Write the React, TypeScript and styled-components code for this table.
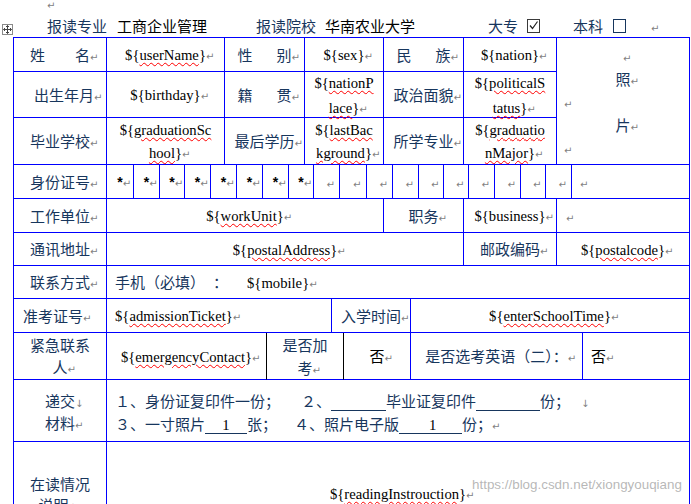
import React from "react";
import styled, { createGlobalStyle } from "styled-components";

const BLUE = "#0000ff";
const NAVY = "#17365d";
const CJK = `"Noto Sans CJK SC", "Noto Sans", sans-serif`;
const SERIF = `"Liberation Serif", "Noto Sans CJK SC", serif`;

const GlobalStyle = createGlobalStyle`
  html, body { margin: 0; padding: 0; background: #ffffff; overflow: hidden; }
  #root { width: 691px; height: 504px; overflow: hidden; }
`;

const Page = styled.div`
  position: relative;
  box-sizing: border-box;
  width: 691px;
  height: 504px;
  overflow: hidden;
  padding-left: 13px;
  font-family: ${CJK};
  font-size: 15px;
  color: ${NAVY};
  background: #fff;
`;

const TopMark = styled.div`
  height: 14px;
  padding-left: 34px;
  line-height: 6px;
`;

const Header = styled.div`
  height: 23px;
  display: flex;
  align-items: center;
  white-space: nowrap;
  line-height: 23px;
`;

const HText = styled.span<{ $ml: number; $black?: boolean }>`
  margin-left: ${(p) => p.$ml}px;
  color: ${(p) => (p.$black ? "#000" : NAVY)};
`;

const Tick = styled.span<{ $ml: number; $color: string }>`
  display: inline-flex;
  box-sizing: border-box;
  width: 13px;
  height: 14px;
  margin-left: ${(p) => p.$ml}px;
  border: 1px solid ${(p) => p.$color};
  align-items: center;
  justify-content: center;
`;

const Mark = styled.span<{ $ml?: number }>`
  display: inline-block;
  width: 0;
  margin-left: ${(p) => p.$ml ?? 0}px;
  font-family: "DejaVu Sans", sans-serif;
  font-size: 10px;
  line-height: 10px;
  font-weight: normal;
  color: #7f7f7f;
  white-space: nowrap;
`;

const TableWrap = styled.div`
  position: relative;
  width: 677px;
`;

const MoveHandle = styled.div`
  position: absolute;
  left: -11px;
  top: -13px;
  width: 11px;
  height: 11px;
  box-sizing: border-box;
  border: 1px solid #8a8a8a;
  background: #fff;
  display: flex;
  align-items: center;
  justify-content: center;
`;

const Table = styled.div`
  box-sizing: border-box;
  width: 677px;
  border-left: 1px solid ${BLUE};
  border-top: 1px solid ${BLUE};
`;

const TopGrid = styled.div`
  display: grid;
  grid-template-columns: 93px 118px 80px 79px 80px 93px 133px;
  grid-template-rows: 34px 46px 47px;
`;

const Row = styled.div<{ $cols: string; $h: number }>`
  display: grid;
  grid-template-columns: ${(p) => p.$cols};
  height: ${(p) => p.$h}px;
`;

const Cell = styled.div<{
  $left?: boolean;
  $pl?: number;
  $pr?: number;
  $pt?: number;
  $rc?: string;
  $lh?: number;
  $rows?: number;
}>`
  box-sizing: border-box;
  min-width: 0;
  display: flex;
  flex-direction: column;
  justify-content: center;
  align-items: ${(p) => (p.$left ? "flex-start" : "center")};
  padding: ${(p) => p.$pt ?? 0}px ${(p) => p.$pr ?? 7}px 0 ${(p) => p.$pl ?? 7}px;
  border-right: 1px solid ${(p) => p.$rc ?? BLUE};
  border-bottom: 1px solid ${BLUE};
  line-height: ${(p) => p.$lh ?? 20}px;
  white-space: nowrap;
  ${(p) => (p.$rows ? `grid-row: span ${p.$rows};` : "")}
`;

const Line = styled.div<{ $left?: boolean; $mr?: number }>`
  white-space: nowrap;
  ${(p) => (p.$left ? "align-self: flex-start;" : "")}
  margin-right: ${(p) => p.$mr ?? 0}px;
`;

const Val = styled.span`
  font-family: ${SERIF};
  font-size: 14.67px;
  color: #000;
`;

const Sq = styled.span`
  text-decoration-line: underline;
  text-decoration-style: wavy;
  text-decoration-color: #ff0000;
  text-decoration-thickness: 1px;
  text-underline-offset: 2px;
`;

const Black = styled.span`
  color: #000;
`;

const Gap = styled.span<{ $w: number }>`
  display: inline-block;
  width: ${(p) => p.$w}px;
`;

const Blank = styled.span<{ $w: number; $pl?: number }>`
  display: inline-block;
  box-sizing: border-box;
  width: ${(p) => p.$w}px;
  padding-left: ${(p) => p.$pl ?? 0}px;
  text-align: ${(p) => (p.$pl != null ? "left" : "center")};
  font-family: ${SERIF};
  font-size: 14.67px;
  line-height: 15px;
  color: #000;
  border-bottom: 1px solid ${NAVY};
`;

const Star = styled.span`
  font-family: "Liberation Sans", sans-serif;
  font-weight: 700;
  font-size: 14px;
  color: #000;
`;

const Watermark = styled.div`
  position: absolute;
  left: 472px;
  top: 476px;
  font-family: "Liberation Sans", Arial, sans-serif;
  font-size: 13.4px;
  line-height: 18px;
  color: rgba(160, 160, 160, 0.75);
  white-space: nowrap;
  pointer-events: none;
  text-shadow: 0 0 1px #fff;
`;

const P = ({ children }: { children?: React.ReactNode }) => <Mark>{children ?? "↵"}</Mark>;

const V = ({ name, sq = true }: { name: string; sq?: boolean }) => (
  <Val>
    {"${"}
    {sq ? <Sq>{name}</Sq> : name}
    {"}"}
  </Val>
);

const Spread = ({ a, b, gap }: { a: string; b: string; gap: number }) => (
  <Line>
    {a}
    <Gap $w={gap} />
    {b}
    <P />
  </Line>
);

const Label = ({ text }: { text: string }) => (
  <Line>
    {text}
    <P />
  </Line>
);

const Value = ({ name, sq = true }: { name: string; sq?: boolean }) => (
  <Line>
    <V name={name} sq={sq} />
    <P />
  </Line>
);

const Split = ({ a, b }: { a: string; b: string }) => (
  <>
    <Line>
      <Val>
        {"${"}
        <Sq>{a}</Sq>
      </Val>
    </Line>
    <Line>
      <Val>
        <Sq>{b}</Sq>
        {"}"}
      </Val>
      <P />
    </Line>
  </>
);

const idWidths = [27, 26, 25, 26, 26, 26, 26, 25, 26, 27, 26, 26, 25, 25, 26, 26, 25, 26];
const idCols = `93px ${idWidths.map((w) => `${w}px`).join(" ")} 118px`;

export default function App() {
  return (
    <Page>
      <GlobalStyle />
      <TopMark>
        <P />
      </TopMark>
      <Header>
        <HText $ml={34}>报读专业</HText>
        <HText $ml={10} $black>
          工商企业管理
        </HText>
        <HText $ml={49}>报读院校</HText>
        <HText $ml={9} $black>
          华南农业大学
        </HText>
        <HText $ml={73}>大专</HText>
        <Tick $ml={9} $color="#3a3a3a">
          <svg width="11" height="11" viewBox="0 0 11 11">
            <path d="M2 5.5 L4.5 8.5 L9.5 1.5" fill="none" stroke="#222" strokeWidth="1.2" />
          </svg>
        </Tick>
        <HText $ml={33}>本科</HText>
        <Tick $ml={10} $color={NAVY} />
        <HText $ml={25}>
          <P />
        </HText>
      </Header>
      <TableWrap>
        <MoveHandle>
          <svg width="9" height="9" viewBox="0 0 9 9">
            <path
              d="M4.5 0.5 V8.5 M0.5 4.5 H8.5 M3 2 L4.5 0.5 L6 2 M3 7 L4.5 8.5 L6 7 M2 3 L0.5 4.5 L2 6 M7 3 L8.5 4.5 L7 6"
              fill="none"
              stroke="#444"
              strokeWidth="1"
            />
          </svg>
        </MoveHandle>
        <Table>
          <TopGrid>
            <Cell>
              <Spread a="姓" b="名" gap={30} />
            </Cell>
            <Cell>
              <Value name="userName" />
            </Cell>
            <Cell>
              <Spread a="性" b="别" gap={24} />
            </Cell>
            <Cell>
              <Value name="sex" sq={false} />
            </Cell>
            <Cell>
              <Spread a="民" b="族" gap={24} />
            </Cell>
            <Cell>
              <Value name="nation" sq={false} />
            </Cell>
            <Cell $rows={3} $lh={23}>
              <Line>
                <P />
              </Line>
              <Line>
                照<P />
              </Line>
              <Line $left>
                <P />
              </Line>
              <Line>
                片<P />
              </Line>
              <Line $left>
                <P />
              </Line>
            </Cell>

            <Cell $pl={15}>
              <Label text="出生年月" />
            </Cell>
            <Cell>
              <Value name="birthday" sq={false} />
            </Cell>
            <Cell>
              <Spread a="籍" b="贯" gap={24} />
            </Cell>
            <Cell $lh={24}>
              <Split a="nationP" b="lace" />
            </Cell>
            <Cell>
              <Label text="政治面貌" />
            </Cell>
            <Cell $lh={24}>
              <Split a="politicalS" b="tatus" />
            </Cell>

            <Cell>
              <Label text="毕业学校" />
            </Cell>
            <Cell $lh={22}>
              <Split a="graduationSc" b="hool" />
            </Cell>
            <Cell>
              <Label text="最后学历" />
            </Cell>
            <Cell $lh={22}>
              <Split a="lastBac" b="kground" />
            </Cell>
            <Cell>
              <Label text="所学专业" />
            </Cell>
            <Cell $lh={22}>
              <Split a="graduatio" b="nMajor" />
            </Cell>
          </TopGrid>

          <Row $cols={idCols} $h={34}>
            <Cell>
              <Label text="身份证号" />
            </Cell>
            {idWidths.map((_, i) => (
              <Cell key={i} $pl={0} $pr={0}>
                <Line>
                  {i < 8 ? <Star>*</Star> : null}
                  <P />
                </Line>
              </Cell>
            ))}
            <Cell $left $pl={8}>
              <Line>
                <P />
              </Line>
            </Cell>
          </Row>

          <Row $cols="93px 277px 80px 93px 133px" $h={34}>
            <Cell>
              <Label text="工作单位" />
            </Cell>
            <Cell>
              <Value name="workUnit" />
            </Cell>
            <Cell>
              <Label text="职务" />
            </Cell>
            <Cell>
              <Value name="business" sq={false} />
            </Cell>
            <Cell $left $pl={9}>
              <Line>
                <P />
              </Line>
            </Cell>
          </Row>

          <Row $cols="93px 357px 93px 133px" $h={33}>
            <Cell>
              <Label text="通讯地址" />
            </Cell>
            <Cell>
              <Value name="postalAddress" />
            </Cell>
            <Cell>
              <Label text="邮政编码" />
            </Cell>
            <Cell>
              <Value name="postalcode" />
            </Cell>
          </Row>

          <Row $cols="93px 583px" $h={33}>
            <Cell>
              <Label text="联系方式" />
            </Cell>
            <Cell $left $pl={8}>
              <Line>
                手机（必填）
                <Gap $w={8} />：<Gap $w={19} />
                <V name="mobile" sq={false} />
                <P />
              </Line>
            </Cell>
          </Row>

          <Row $cols="93px 225px 79px 279px" $h={34}>
            <Cell $pl={0} $pr={14}>
              <Label text="准考证号" />
            </Cell>
            <Cell $left $pl={8}>
              <Value name="admissionTicket" />
            </Cell>
            <Cell>
              <Label text="入学时间" />
            </Cell>
            <Cell>
              <Value name="enterSchoolTime" />
            </Cell>
          </Row>

          <Row $cols="93px 160px 77px 67px 172px 107px" $h={46}>
            <Cell $lh={22}>
              <Line>紧急联系</Line>
              <Line>
                人<P />
              </Line>
            </Cell>
            <Cell $rc="#000">
              <Value name="emergencyContact" />
            </Cell>
            <Cell $rc="#000" $lh={23}>
              <Line>是否加</Line>
              <Line>
                考<P />
              </Line>
            </Cell>
            <Cell>
              <Line>
                <Black>否</Black>
                <P />
              </Line>
            </Cell>
            <Cell>
              <Label text="是否选考英语（二）：" />
            </Cell>
            <Cell $left $pl={8}>
              <Line>
                <Black>否</Black>
                <P />
              </Line>
            </Cell>
          </Row>

          <Row $cols="93px 583px" $h={63}>
            <Cell $lh={22} $pt={3}>
              <Line>
                递交<P>↓</P>
              </Line>
              <Line>
                材料<P />
              </Line>
            </Cell>
            <Cell $left $pl={8} $lh={23} $pt={3}>
              <Line>
                １、身份证复印件一份；
                <Gap $w={21} />
                ２、
                <Blank $w={55}>{"\u00a0"}</Blank>
                毕业证复印件
                <Blank $w={64}>{"\u00a0"}</Blank>
                份；
                <Gap $w={11} />
                <P>↓</P>
              </Line>
              <Line>
                ３、一寸照片
                <Blank $w={42}>1</Blank>
                张；
                <Gap $w={17} />
                ４、照片电子版
                <Blank $w={63} $pl={30}>
                  1
                </Blank>
                份；
                <P />
              </Line>
            </Cell>
          </Row>

          <Row $cols="93px 583px" $h={104}>
            <Cell $lh={21}>
              <Line>在读情况</Line>
              <Line $mr={13}>
                说明<P>↓</P>
              </Line>
            </Cell>
            <Cell>
              <Value name="readingInstrouction" />
            </Cell>
          </Row>
        </Table>
      </TableWrap>
      <Watermark>https://blog.csdn.net/xiongyouqiang</Watermark>
    </Page>
  );
}
